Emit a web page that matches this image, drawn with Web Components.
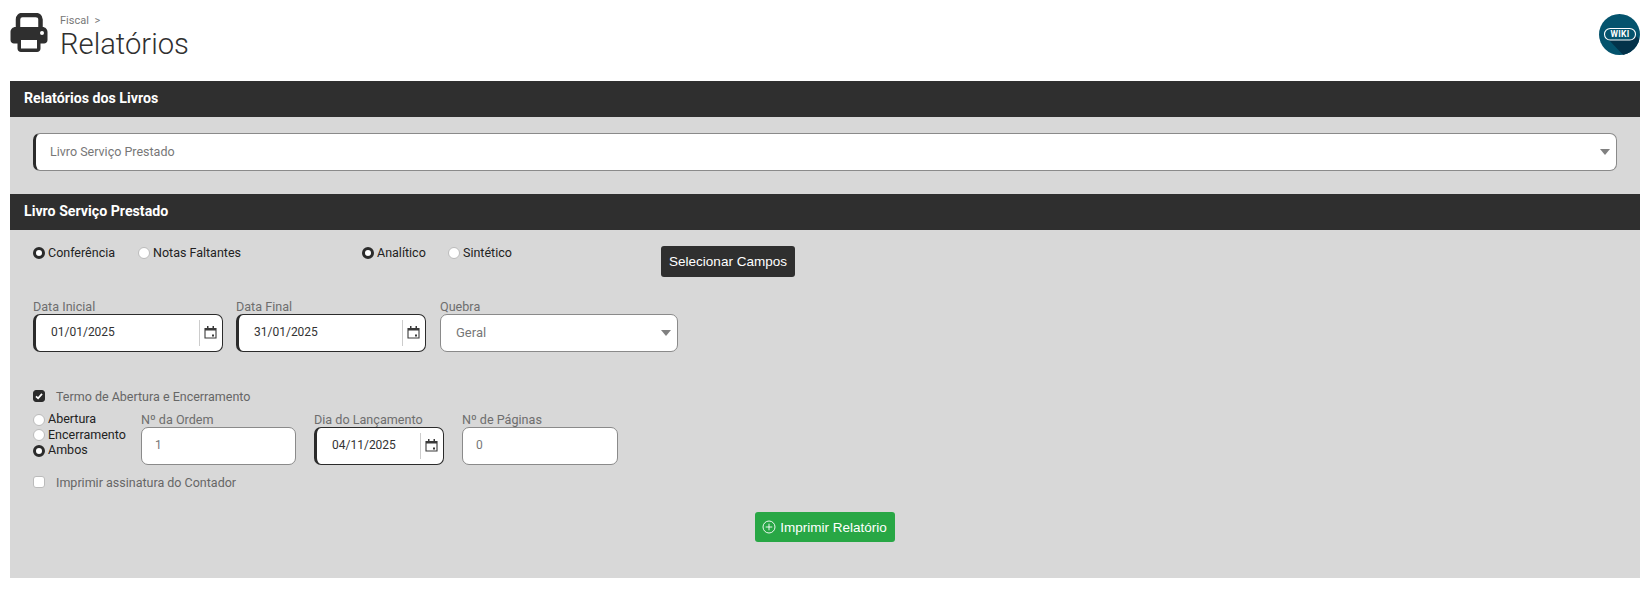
<!DOCTYPE html>
<html lang="pt-BR">
<head>
<meta charset="utf-8">
<title>Relatórios</title>
<style>
  html, body { margin: 0; background: #fff; }
  body { font-family: Roboto, "Liberation Sans", sans-serif; }
</style>
</head>
<body>
<page-header section="Fiscal" title="Relatórios"></page-header>

<report-panel heading="Relatórios dos Livros" pad="16px 23px 23px 23px">
  <select-box value="Livro Serviço Prestado" accent></select-box>
</report-panel>

<report-panel heading="Livro Serviço Prestado" pad="0 23px 36px 23px">
  <form-row top="16" height="32">
    <radio-opt checked width="105">Conferência</radio-opt>
    <radio-opt width="224">Notas Faltantes</radio-opt>
    <radio-opt checked width="86">Analítico</radio-opt>
    <radio-opt width="213">Sintético</radio-opt>
    <dark-button>Selecionar Campos</dark-button>
  </form-row>
  <form-row top="21" gap="13">
    <text-field label="Data Inicial" value="01/01/2025" date accent width="190"></text-field>
    <text-field label="Data Final" value="31/01/2025" date accent width="190"></text-field>
    <text-field label="Quebra" width="238" style="margin-left: 1px"><select-box value="Geral"></select-box></text-field>
  </form-row>
  <form-row top="36">
    <check-opt checked>Termo de Abertura e Encerramento</check-opt>
  </form-row>
  <form-row top="8" gap="18">
    <radio-stack>
      <radio-opt compact>Abertura</radio-opt>
      <radio-opt compact>Encerramento</radio-opt>
      <radio-opt compact checked>Ambos</radio-opt>
    </radio-stack>
    <text-field label="Nº da Ordem" value="1" muted width="155"></text-field>
    <text-field label="Dia do Lançamento" value="04/11/2025" date accent width="130"></text-field>
    <text-field label="Nº de Páginas" value="0" muted width="156"></text-field>
  </form-row>
  <form-row top="9">
    <check-opt>Imprimir assinatura do Contador</check-opt>
  </form-row>
  <form-row top="22" center>
    <print-button>Imprimir Relatório</print-button>
  </form-row>
</report-panel>

<script>
const attr = (el, name, fallback = "") => el.hasAttribute(name) ? el.getAttribute(name) : fallback;

class PageHeader extends HTMLElement {
  connectedCallback() {
    this.attachShadow({ mode: "open" }).innerHTML = /* html */`
    <style>
      :host { display: flex; align-items: flex-start; height: 81px; padding: 0 12px 0 10px; box-sizing: border-box; color: #2f2f2f; }
      .printer { width: 38px; height: 40px; margin-top: 13px; flex: none; }
      .titles { margin-left: 12px; padding-top: 14px; flex: 1; }
      .crumb { font-size: 11px; line-height: 13px; color: #777; }
      .crumb span { margin-left: 3px; }
      h1 { margin: 0; font-size: 29.200px; line-height: 34px; font-weight: 300; color: #303030; }
      .wiki { width: 41px; height: 41px; margin-top: 14px; flex: none; }
    </style>
    <svg class="printer" viewBox="0 0 38 40">
      <path d="M8 15V6.500C8 3.500 10 2 12.500 2h13C28 2 30.500 3.500 30.500 6.500V15" fill="none" stroke="#2f2f2f" stroke-width="4.500"/>
      <path d="M5.500 14h27c2.800 0 5 2.200 5 5v8c0 2-1.500 3.500-3.500 3.500h-3.500v5c0 2.200-1.500 3.500-3.500 3.500h-16c-2 0-3.500-1.300-3.500-3.500v-5H4c-2 0-3.500-1.500-3.500-3.500v-8c0-2.800 2.200-5 5-5z" fill="#2f2f2f"/>
      <rect x="11" y="27" width="16" height="8.500" fill="#fff"/>
      <circle cx="32" cy="20" r="2" fill="#fff"/>
    </svg>
    <div class="titles">
      <div class="crumb">${attr(this, "section")}<span> &gt;</span></div>
      <h1>${attr(this, "title")}</h1>
    </div>
    <svg class="wiki" viewBox="0 0 41 41">
      <defs><clipPath id="c"><circle cx="20.500" cy="20.500" r="20.500"/></clipPath></defs>
      <circle cx="20.500" cy="20.500" r="20.500" fill="#04536d"/>
      <path d="M9 25 L37 22 L46 31 L46 46 L29 46 Z" fill="#03324a" clip-path="url(#c)"/>
      <rect x="5.500" y="14.500" width="31" height="11.500" rx="5.700" fill="#04536d" stroke="#fff" stroke-width="1.100"/>
      <text x="21" y="23.400" text-anchor="middle" font-family="Roboto, sans-serif" font-size="8.500" font-weight="700" letter-spacing=".3" fill="#fff">WIKI</text>
    </svg>`;
  }
}

class ReportPanel extends HTMLElement {
  connectedCallback() {
    this.attachShadow({ mode: "open" }).innerHTML = /* html */`
    <style>
      :host { display: block; margin: 0 12px 0 10px; background: #d8d8d8; }
      h2 { margin: 0; height: 36px; padding-left: 14px; background: #2f2f2f; color: #fff; font-size: 14.200px; font-weight: 700; line-height: 35.500px; }
      .body { padding: ${attr(this, "pad")}; }
    </style>
    <h2>${attr(this, "heading")}</h2>
    <div class="body"><slot></slot></div>`;
  }
}

class FormRow extends HTMLElement {
  connectedCallback() {
    const height = attr(this, "height");
    this.attachShadow({ mode: "open" }).innerHTML = /* html */`
    <style>
      :host {
        display: flex;
        margin-top: ${attr(this, "top", "0")}px;
        gap: ${attr(this, "gap", "0")}px;
        ${height ? `height: ${height}px;` : ""}
        ${this.hasAttribute("center") ? "justify-content: center; padding-right: 1px;" : ""}
      }
    </style>
    <slot></slot>`;
  }
}

class RadioOpt extends HTMLElement {
  connectedCallback() {
    const checked = this.hasAttribute("checked");
    const width = attr(this, "width");
    const compact = this.hasAttribute("compact");
    this.attachShadow({ mode: "open" }).innerHTML = /* html */`
    <style>
      :host { display: flex; align-items: center; flex: none; height: ${compact ? "15.500px" : "14px"}; ${width ? `width: ${width}px;` : ""} font-size: 12.500px; color: #222; }
      i { width: 12px; height: 12px; margin-right: 3px; border-radius: 50%; box-sizing: border-box; flex: none; background: #fff; border: 1px solid #bbb; }
      i.on { border: 3.500px solid #2b2b2b; }
      span { position: relative; top: -1px; }
    </style>
    <i class="${checked ? "on" : ""}"></i><span><slot></slot></span>`;
  }
}

class RadioStack extends HTMLElement {
  connectedCallback() {
    this.attachShadow({ mode: "open" }).innerHTML = /* html */`
    <style>:host { display: flex; flex-direction: column; width: 90px; }</style>
    <slot></slot>`;
  }
}

class CheckOpt extends HTMLElement {
  connectedCallback() {
    const checked = this.hasAttribute("checked");
    this.attachShadow({ mode: "open" }).innerHTML = /* html */`
    <style>
      :host { display: flex; align-items: center; height: 16px; font-size: 12.500px; color: #666; }
      b { display: grid; place-items: center; width: 12px; height: 12px; margin-right: 11px; border-radius: 3px; box-sizing: border-box; background: ${checked ? "#2b2b2b" : "#fff"}; border: 1px solid ${checked ? "#2b2b2b" : "#bbb"}; }
      svg { width: 8px; height: 8px; }
    </style>
    <b>${checked ? `<svg viewBox="0 0 8 8"><path d="M1 4.300 3.100 6.300 7 1.800" fill="none" stroke="#fff" stroke-width="1.800"/></svg>` : ""}</b>
    <span><slot></slot></span>`;
  }
}

class SelectBox extends HTMLElement {
  connectedCallback() {
    const accent = this.hasAttribute("accent");
    this.attachShadow({ mode: "open" }).innerHTML = /* html */`
    <style>
      :host { display: flex; align-items: center; height: 38px; padding: 0 6px 0 ${accent ? "14px" : "15px"}; box-sizing: border-box; background: #fff; border: 1px solid #8a8a8a; border-radius: 7px; font-size: ${accent ? "12.500px" : "13px"}; color: #777; ${accent ? "border-left: 3px solid #2b2b2b;" : ""} }
      span { flex: 1; position: relative; top: -1px; }
      i { width: 0; height: 0; border: 5.500px solid transparent; border-top: 6px solid #808080; border-bottom: 0; }
    </style>
    <span>${attr(this, "value")}</span><i></i>`;
  }
}

class TextField extends HTMLElement {
  connectedCallback() {
    const date = this.hasAttribute("date");
    const accent = this.hasAttribute("accent");
    const muted = this.hasAttribute("muted");
    const value = attr(this, "value");
    this.attachShadow({ mode: "open" }).innerHTML = /* html */`
    <style>
      :host { display: block; flex: none; width: ${attr(this, "width")}px; }
      label { display: block; height: 15px; font-size: 12.600px; line-height: 15px; color: #6e6e6e; white-space: nowrap; }
      .box { display: flex; align-items: center; height: 38px; box-sizing: border-box; background: #fff; border: 1px solid ${accent ? "#2b2b2b" : "#8a8a8a"}; border-radius: 7px; font-size: 12px; padding-left: ${accent ? "15px" : "13px"}; color: ${muted ? "#777" : "#333"}; ${accent ? "border-left: 3px solid #2b2b2b;" : ""} }
      .box span { flex: 1; position: relative; top: -1px; }
      .cal { display: flex; align-items: center; justify-content: center; width: 22px; height: 26px; border-left: 1px solid #ccc; flex: none; }
      .cal svg { margin: -3px 0 0 -1px; }
    </style>
    <label>${attr(this, "label")}</label>
    ${value ? `<div class="box"><span>${value}</span>${date ? `<div class="cal"><svg width="13" height="14" viewBox="0 0 13 14">
      <path d="M1 3.500h11v9.500H1z" fill="none" stroke="#3a3a3a" stroke-width="1.100"/>
      <path d="M1 3h11v2.500H1zM3 1h1.500v2H3zM8.500 1H10v2H8.500z" fill="#3a3a3a"/>
      <rect x="8" y="9.500" width="2" height="2" fill="#3a3a3a"/></svg></div>` : ""}</div>` : "<slot></slot>"}`;
  }
}

class DarkButton extends HTMLElement {
  connectedCallback() {
    this.attachShadow({ mode: "open" }).innerHTML = /* html */`
    <style>
      :host { display: flex; align-items: center; justify-content: center; width: 134px; height: 31px; background: #2f2f2f; color: #fff; border-radius: 3px; font-family: "Liberation Sans", sans-serif; font-size: 13.500px; }
    </style>
    <slot></slot>`;
  }
}

class PrintButton extends HTMLElement {
  connectedCallback() {
    this.attachShadow({ mode: "open" }).innerHTML = /* html */`
    <style>
      :host { display: flex; align-items: center; gap: 4px; justify-content: center; width: 140px; height: 30px; background: #28a745; color: #fff; border-radius: 3px; font-family: "Liberation Sans", sans-serif; font-size: 13.500px; }
    </style>
    <svg width="14" height="14" viewBox="0 0 14 14" fill="none" stroke="#fff" stroke-width=".9">
      <circle cx="7" cy="7" r="6"/><path d="M7 3.700v6.600M3.700 7h6.600"/>
    </svg>
    <slot></slot>`;
  }
}

customElements.define("page-header", PageHeader);
customElements.define("report-panel", ReportPanel);
customElements.define("form-row", FormRow);
customElements.define("radio-opt", RadioOpt);
customElements.define("radio-stack", RadioStack);
customElements.define("check-opt", CheckOpt);
customElements.define("select-box", SelectBox);
customElements.define("text-field", TextField);
customElements.define("dark-button", DarkButton);
customElements.define("print-button", PrintButton);
</script>
</body>
</html>
